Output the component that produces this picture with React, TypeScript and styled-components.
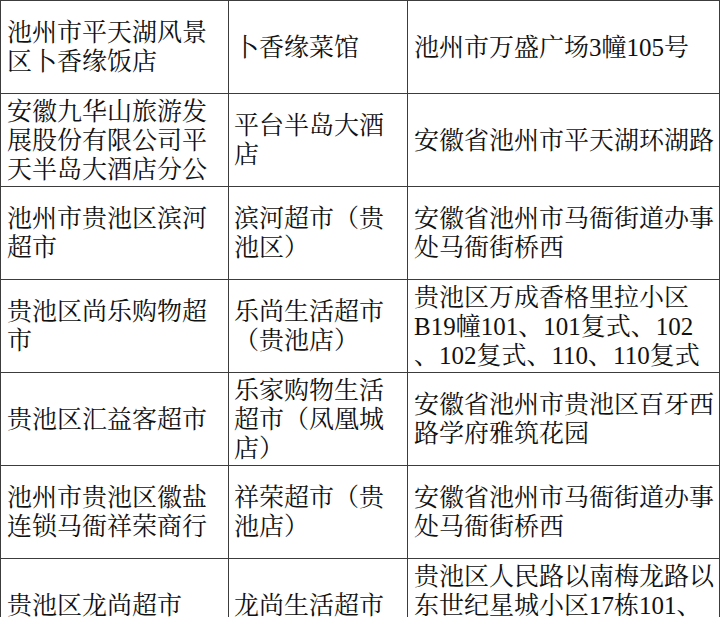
import React, { FC } from 'react'
import styled, { createGlobalStyle } from 'styled-components';

const GlobalStyle = createGlobalStyle`
    html, body {
        margin: 0;
        padding: 0;
        background: #ffffff;
        overflow: hidden;
    }
`;

const Page = styled.div`
    width: 720px;
    height: 617px;
    overflow: hidden;
    background: #ffffff;
`;

const Table = styled.table`
    border-collapse: collapse;
    table-layout: fixed;
    width: 719px;

    font-family: "Liberation Serif", "Noto Serif CJK SC", "Noto Sans CJK SC", serif;
    font-size: 25px;
    line-height: 29px;
    color: #111111;
`;

const Cell = styled.td<{ $pad: number }>`
    border: 1px solid #3c3c3c;
    height: 92px;
    padding: 0 0 0 ${p => p.$pad}px;
    vertical-align: middle;
    white-space: nowrap;
    overflow: hidden;
`;

const Line = styled.div`
    display: block;
`;

const rows: string[][][] = [
    [['池州市平天湖风景', '区卜香缘饭店'], ['卜香缘菜馆'], ['池州市万盛广场3幢105号']],
    [['安徽九华山旅游发', '展股份有限公司平', '天半岛大酒店分公'], ['平台半岛大酒', '店'], ['安徽省池州市平天湖环湖路']],
    [['池州市贵池区滨河', '超市'], ['滨河超市（贵', '池区）'], ['安徽省池州市马衙街道办事', '处马衙街桥西']],
    [['贵池区尚乐购物超', '市'], ['乐尚生活超市', '（贵池店）'], ['贵池区万成香格里拉小区', 'B19幢101、101复式、102', '、102复式、110、110复式']],
    [['贵池区汇益客超市'], ['乐家购物生活', '超市（凤凰城', '店）'], ['安徽省池州市贵池区百牙西', '路学府雅筑花园']],
    [['池州市贵池区徽盐', '连锁马衙祥荣商行'], ['祥荣超市（贵', '池店）'], ['安徽省池州市马衙街道办事', '处马衙街桥西']],
    [['贵池区龙尚超市'], ['龙尚生活超市'], ['贵池区人民路以南梅龙路以', '东世纪星城小区17栋101、', '102室']],
];

const widths = [228, 179, 312];
const pads = [6, 5, 6];

export default function App() {
    return (
        <Page>
            <GlobalStyle />
            <Table>
                <colgroup>
                    {widths.map((w, i) => <col key={i} style={{ width: w }} />)}
                </colgroup>
                <tbody>
                    {rows.map((row, r) => (
                        <tr key={r}>
                            {row.map((cell, c) => (
                                <Cell key={c} $pad={pads[c]}>
                                    {cell.map((line, l) => <Line key={l}>{line}</Line>)}
                                </Cell>
                            ))}
                        </tr>
                    ))}
                </tbody>
            </Table>
        </Page>
    )
}
